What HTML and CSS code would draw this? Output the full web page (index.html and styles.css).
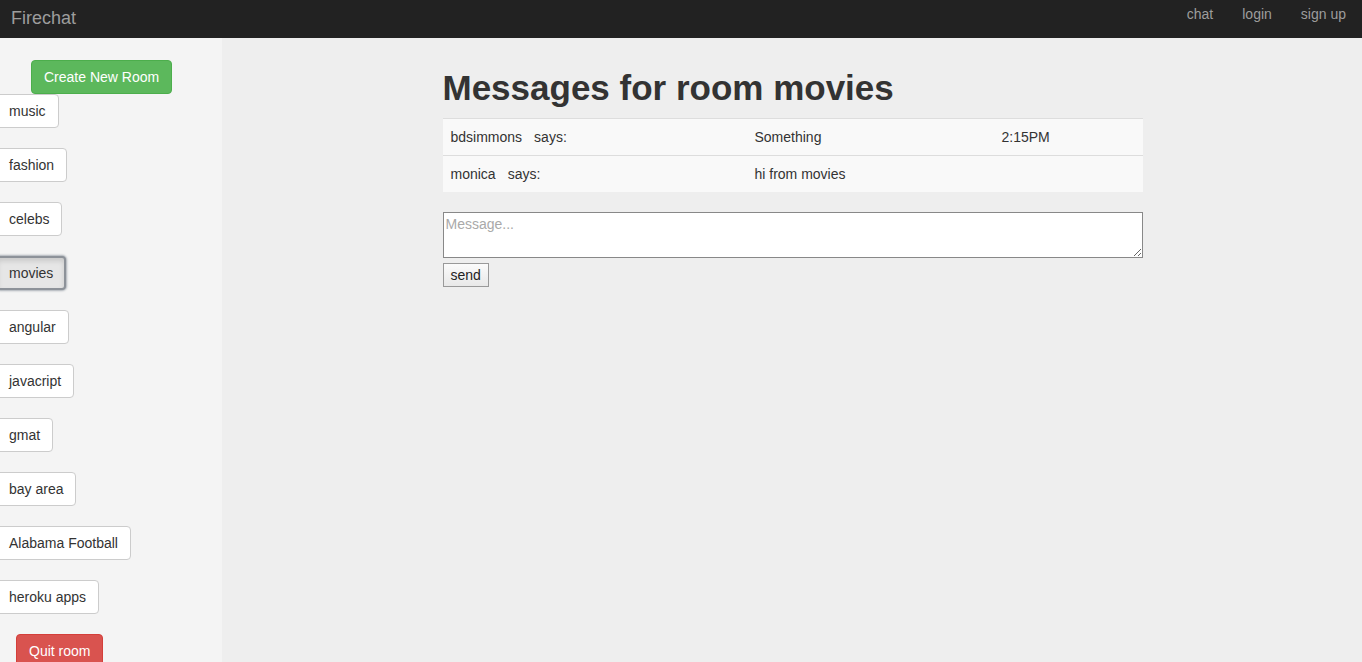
FILE: index.html
```html
<!DOCTYPE html>
<html>
<head>
<meta charset="utf-8">
<title>Firechat</title>
<link rel="stylesheet" href="styles.css">
</head>
<body>
<nav class="navbar">
  <a class="brand" href="#">Firechat</a>
  <ul class="nav-links">
    <li><a href="#">chat</a></li>
    <li><a href="#">login</a></li>
    <li><a href="#">sign up</a></li>
  </ul>
</nav>
<div class="layout">
  <aside class="sidebar">
    <button class="btn btn-success create">Create New Room</button>
    <div class="rooms">
      <button class="btn room">music</button>
      <button class="btn room">fashion</button>
      <button class="btn room">celebs</button>
      <button class="btn room active">movies</button>
      <button class="btn room">angular</button>
      <button class="btn room">javacript</button>
      <button class="btn room">gmat</button>
      <button class="btn room">bay area</button>
      <button class="btn room">Alabama Football</button>
      <button class="btn room">heroku apps</button>
    </div>
    <button class="btn btn-danger quit">Quit room</button>
  </aside>
  <main class="main">
    <div class="content">
      <h1 class="title">Messages for room movies</h1>
      <table class="messages">
        <tr>
          <td class="c-user"><span class="user">bdsimmons</span><span class="says">says:</span></td>
          <td class="c-text">Something</td>
          <td class="c-time">2:15PM</td>
        </tr>
        <tr>
          <td class="c-user"><span class="user">monica</span><span class="says">says:</span></td>
          <td class="c-text">hi from movies</td>
          <td class="c-time"></td>
        </tr>
      </table>
      <textarea class="msg-input" placeholder="Message..."></textarea>
      <button class="send">send</button>
    </div>
  </main>
</div>
</body>
</html>
```

FILE: styles.css
```css
* { box-sizing: border-box; }
html, body { margin: 0; padding: 0; height: 100%; }
body {
  font-family: "Liberation Sans", Arial, Helvetica, sans-serif;
  font-size: 14px;
  line-height: 20px;
  color: #333;
  background: #eeeeee;
  overflow: hidden;
}
.navbar {
  height: 38px;
  background: #222222;
  display: flex;
  align-items: center;
  justify-content: space-between;
}
.brand {
  color: #9d9d9d;
  text-decoration: none;
  font-size: 18px;
  padding-left: 11px;
  margin-top: -3px;
}
.nav-links {
  list-style: none;
  margin: 0;
  padding: 0;
  display: flex;
  margin-top: -10px;
  margin-right: 2px;
}
.nav-links a {
  display: block;
  color: #9d9d9d;
  text-decoration: none;
  padding: 0 14px 0 15px;
}
.layout {
  display: flex;
  height: calc(100% - 38px);
}
.sidebar {
  width: 222px;
  flex: none;
  background: #f4f4f4;
  padding-top: 22px;
  display: flex;
  flex-direction: column;
  align-items: flex-start;
}
.btn {
  font-family: inherit;
  font-size: 14px;
  line-height: 20px;
  padding: 6px 12px;
  border-radius: 4px;
  border: 1px solid #ccc;
  background: #fff;
  color: #333;
  cursor: pointer;
}
.btn-success {
  background: #5cb85c;
  border-color: #4cae4c;
  color: #fff;
}
.btn-danger {
  background: #d9534f;
  border-color: #d43f3a;
  color: #fff;
}
.create {
  margin-left: 31px;
  margin-bottom: 0;
}
.rooms {
  display: flex;
  flex-direction: column;
  align-items: flex-start;
  gap: 20px;
}
.room {
  margin-left: -4px;
}
.room.active {
  background: #e6e6e6;
  border: 2px solid #8d9299;
  padding: 5px 11px;
  box-shadow: 0 0 2px 1px rgba(120,130,140,0.6), inset 0 3px 5px rgba(0,0,0,0.125);
}
.quit {
  margin-left: 16px;
  margin-top: 20px;
}
.main {
  flex: 1;
  display: flex;
  justify-content: center;
  padding-top: 11px;
}
.content {
  width: 700px;
  margin-left: 1px;
}
.title {
  font-size: 35px;
  font-weight: bold;
  line-height: 1.1;
  margin: 20px 0 10px;
  color: #333;
}
.messages {
  width: 700px;
  border-collapse: collapse;
  margin-bottom: 20px;
}
.messages td {
  background: #f9f9f9;
  border-top: 1px solid #dddddd;
  padding: 8px;
  line-height: 20px;
  vertical-align: top;
}
.c-user { width: 304px; }
.c-text { width: 247px; }
.c-time { width: 149px; }
.says { margin-left: 12px; }
.msg-input {
  display: block;
  width: 700px;
  height: 46px;
  border: 1px solid #888;
  font-family: inherit;
  font-size: 14px;
  padding: 3px 2px;
  resize: vertical;
  background: #fff;
  margin: 0;
}
.msg-input::placeholder { color: #a9a9a9; }
.send {
  display: block;
  margin-top: 5px;
  font-family: inherit;
  font-size: 14px;
  line-height: 18px;
  padding: 2px 7px;
  border: 1px solid #999;
  background: linear-gradient(#fbfbfb, #e8e8e8);
  color: #222;
  border-radius: 0;
}
```
